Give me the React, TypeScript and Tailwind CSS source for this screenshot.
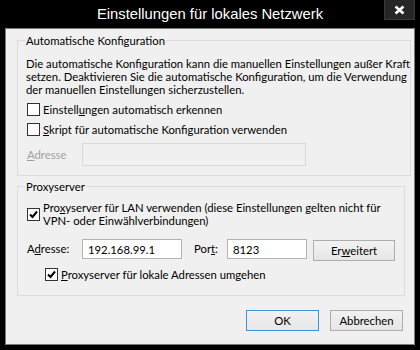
import React from "react";

function Box({ checked }: { checked?: boolean }) {
  return (
    <span className="flex h-[13px] w-[13px] shrink-0 items-center justify-center border border-[#333333] bg-white">
      {checked && (
        <svg width="11" height="11" viewBox="0 0 11 11">
          <path d="M2 5.5 L4.5 8 L9 2.5" fill="none" stroke="#000" strokeWidth="2" />
        </svg>
      )}
    </span>
  );
}

function Btn({ children, primary }: { children: React.ReactNode; primary?: boolean }) {
  return (
    <button
      className={
        primary
          ? "h-[21px] w-[73px] border border-[#3c93e0] bg-gradient-to-b from-[#f2f2f2] to-[#e6e6e6] text-black"
          : "h-[21px] w-[73px] border border-[#adadad] bg-gradient-to-b from-[#f2f2f2] to-[#e6e6e6] text-black"
      }
    >
      {children}
    </button>
  );
}

export default function App() {
  return (
    <div
      className="flex h-[350px] w-[420px] flex-col bg-black text-[11.3px] leading-[15px] text-black"
      style={{ fontFamily: 'Lato, "Liberation Sans", Arial, sans-serif' }}
    >
      {/* title bar */}
      <div className="grid h-[28px] shrink-0 grid-cols-[1fr_auto_1fr] items-start">
        <div />
        <div className="pt-[5px] font-['Liberation_Sans',sans-serif] text-[14.8px] leading-[18px] text-white">
          Einstellungen für lokales Netzwerk
        </div>
        <div className="flex justify-end pr-[5px]">
          <div className="flex h-[20px] w-[31px] items-center justify-center border border-t-0 border-[#3a3a3a] bg-[#262626]">
            <svg width="11" height="10" viewBox="0 0 11 10">
              <path d="M1.5 1.5 L9.5 8.5 M9.5 1.5 L1.5 8.5" stroke="#fff" strokeWidth="2.6" />
            </svg>
          </div>
        </div>
      </div>

      {/* client */}
      <div className="mx-[5px] mb-[5px] flex flex-1 flex-col border border-[#7a7a7a] bg-[#f0f0f0] pl-[11px] pr-[9px] pt-[4px]">
        <fieldset className="border border-[#dcdcdc]">
          <legend className="ml-[7px] px-px leading-[15px]">Automatische Konfiguration</legend>
          <div className="pb-[9px] pl-[9px]">
            <p className="-ml-px mt-[9px] whitespace-nowrap leading-[13px]">
              Die automatische Konfiguration kann die manuellen Einstellungen außer Kraft
              <br />
              setzen. Deaktivieren Sie die automatische Konfiguration, um die Verwendung
              <br />
              der manuellen Einstellungen sicherzustellen.
            </p>
            <label className="mt-[6px] flex items-center gap-[3px]">
              <Box />
              <span>
                Einstell<u>u</u>ngen automatisch erkennen
              </span>
            </label>
            <label className="mt-[5px] flex items-center gap-[3px]">
              <Box />
              <span>
                <u>S</u>kript für automatische Konfiguration verwenden
              </span>
            </label>
            <div className="mt-[6px] flex items-center">
              <span className="w-[55px] text-[#a0a0a0]">
                <u>A</u>dresse
              </span>
              <div className="h-[23px] w-[224px] border border-[#d9d9d9] bg-[#f0f0f0]" />
            </div>
          </div>
        </fieldset>

        <fieldset className="mt-[3px] border border-[#dcdcdc]">
          <legend className="ml-[7px] px-px leading-[15px]">Proxyserver</legend>
          <div className="pb-[13px] pl-[9px]">
            <label className="mt-[7px] flex items-center gap-[3px]">
              <Box checked />
              <span className="whitespace-nowrap leading-[13px]">
                Pro<u>x</u>yserver für LAN verwenden (diese Einstellungen gelten nicht für
                <br />
                VPN- oder Einwählverbindungen)
              </span>
            </label>
            <div className="mt-[12px] flex items-start">
              <span className="mt-[2px] w-[55px]">
                A<u>d</u>resse:
              </span>
              <div className="flex h-[20px] w-[100px] items-center border border-[#b4b4b4] bg-white pl-[5px]">
                192.168.99.1
              </div>
              <span className="ml-[12px] mt-[2px] w-[33px]">
                Por<u>t</u>:
              </span>
              <div className="flex h-[20px] w-[80px] items-center border border-[#b4b4b4] bg-white pl-[5px]">
                8123
              </div>
              <button className="ml-[6px] mt-px h-[21px] w-[82px] border border-[#adadad] bg-gradient-to-b from-[#f2f2f2] to-[#e6e6e6]">
                Er<u>w</u>eitert
              </button>
            </div>
            <label className="ml-[18px] mt-[6px] flex items-center gap-[3px]">
              <Box checked />
              <span>
                <u>P</u>roxyserver für lokale Adressen umgehen
              </span>
            </label>
          </div>
        </fieldset>

        <div className="mr-[2px] mt-[14px] flex justify-end gap-[11px]">
          <Btn primary>OK</Btn>
          <Btn>Abbrechen</Btn>
        </div>
      </div>
    </div>
  );
}
